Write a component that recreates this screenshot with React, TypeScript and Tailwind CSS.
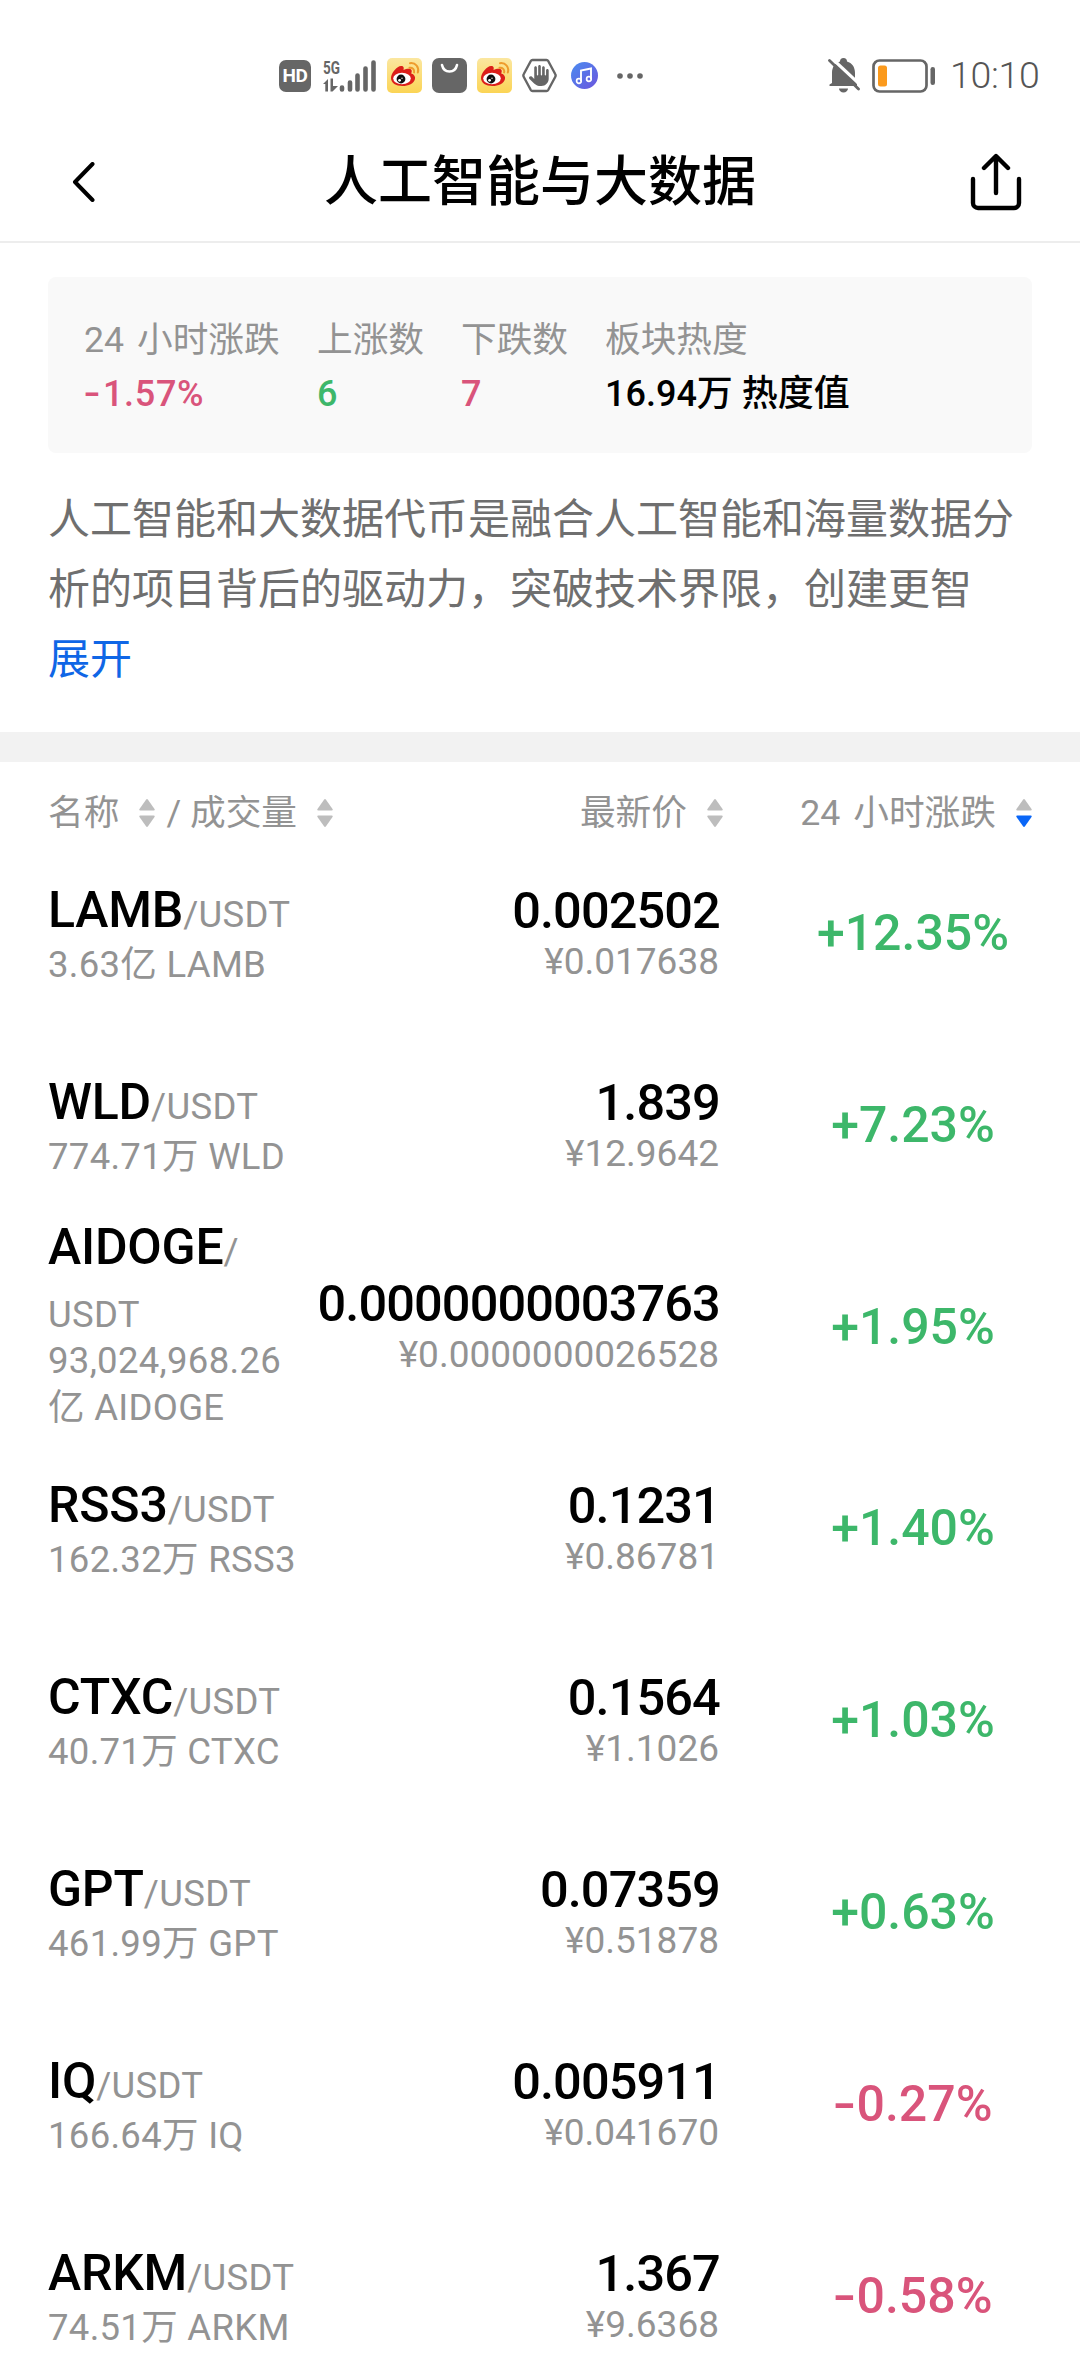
import { FaHand } from "react-icons/fa6";

const stats = [
  { label: "24 小时涨跌", value: "-1.57%", color: "text-[#d9547b]", width: "w-[233px]" },
  { label: "上涨数", value: "6", color: "text-[#3db76a]", width: "w-[144px]" },
  { label: "下跌数", value: "7", color: "text-[#d9547b]", width: "w-[144px]" },
  { label: "板块热度", value: "16.94万 热度值", color: "text-black", width: "w-[280px]" },
];

const coins = [
  { symbol: "LAMB", volume: ["3.63亿 LAMB"], price: "0.002502", cny: "¥0.017638", change: "+12.35%" },
  { symbol: "WLD", volume: ["774.71万 WLD"], price: "1.839", cny: "¥12.9642", change: "+7.23%" },
  {
    symbol: "AIDOGE",
    volume: ["93,024,968.26", "亿 AIDOGE"],
    price: "0.0000000003763",
    cny: "¥0.0000000026528",
    change: "+1.95%",
    tall: true,
  },
  { symbol: "RSS3", volume: ["162.32万 RSS3"], price: "0.1231", cny: "¥0.86781", change: "+1.40%" },
  { symbol: "CTXC", volume: ["40.71万 CTXC"], price: "0.1564", cny: "¥1.1026", change: "+1.03%" },
  { symbol: "GPT", volume: ["461.99万 GPT"], price: "0.07359", cny: "¥0.51878", change: "+0.63%" },
  { symbol: "IQ", volume: ["166.64万 IQ"], price: "0.005911", cny: "¥0.041670", change: "-0.27%" },
  { symbol: "ARKM", volume: ["74.51万 ARKM"], price: "1.367", cny: "¥9.6368", change: "-0.58%" },
];

const WeiboIcon = () => (
  <svg width="35" height="35" viewBox="0 0 35 35">
    <defs>
      <linearGradient id="weibo" x1="0" y1="0" x2="0" y2="1">
        <stop offset="0" stopColor="#fbe7a0" />
        <stop offset="1" stopColor="#fbd455" />
      </linearGradient>
    </defs>
    <rect width="35" height="35" rx="5" fill="url(#weibo)" />
    <path d="M4 20C4 15 10 8 14 8c3 0 3 2 2.500 4 3-1.500 7-2 8 0 .6 1.200 0 2.500-.3 3.400 3 .8 4.300 3 3.800 5.600-.9 4.500-6.500 7-12.500 7C9 28 4 25 4 20z" fill="#dc1f1a" />
    <ellipse cx="15" cy="20.500" rx="8.800" ry="5.700" fill="#fff" />
    <circle cx="14" cy="21" r="4.400" fill="#111" />
    <circle cx="12.600" cy="22.300" r="1.400" fill="#fff" />
    <circle cx="15" cy="20.300" r=".7" fill="#fff" />
    <path d="M22.500 9.800c3-.5 5.300 1.800 4.600 4.600M23 5.200c5.600-.7 9.500 4 7.800 9.300" fill="none" stroke="#ee9c2c" strokeWidth="2" strokeLinecap="round" />
  </svg>
);

const SignalIcon = () => (
  <svg className="overflow-visible" width="54" height="36" viewBox="0 0 54 36" fill="#666">
    <text x="0" y="16" fontSize="18" fontWeight="700" fontFamily="Roboto, sans-serif" textLength="17" lengthAdjust="spacingAndGlyphs">5G</text>
    <path d="M0 26l5-5V33.500H2.300V26zM7.500 20.500H10V28h5l-5.500 5.500h-2z" />
    <g stroke="#666" strokeWidth="4.600" strokeLinecap="round">
      <path d="M19 31.500v-2M27 31.500v-7M34.500 31.500v-14M42.500 31.500V10.500M50.500 31.500V4.500" />
    </g>
  </svg>
);

const StatusBar = () => (
  <div className="flex h-[122px] items-end pl-[279px]">
    <div className="flex h-[93px] w-full items-center">
      <div className="flex h-8 w-8 items-center justify-center rounded-[7px] bg-[#666]">
        <span className="text-[19px] leading-none font-bold tracking-[-0.5px] text-white">HD</span>
      </div>
      <div className="ml-3"><SignalIcon /></div>
      <div className="ml-2.5"><WeiboIcon /></div>
      <svg className="ml-2.5" width="35" height="35" viewBox="0 0 35 35">
        <rect width="35" height="35" rx="7" fill="#666" />
        <path d="M10 7c1 4.500 4 6.500 7.500 6.500S24 11.500 25 7" fill="none" stroke="#fff" strokeWidth="2.600" strokeLinecap="round" />
      </svg>
      <div className="ml-2.5"><WeiboIcon /></div>
      <div className="relative ml-2.5 flex h-[35px] w-[35px] items-center justify-center text-[#666]">
        <svg className="absolute inset-0" width="35" height="35" viewBox="0 0 35 35" fill="none">
          <path d="M10.500 2h14a2 2 0 0 1 1.700 1l7 13a3 3 0 0 1 0 3l-7 13a2 2 0 0 1-1.700 1h-14a2 2 0 0 1-1.700-1l-7-13a3 3 0 0 1 0-3l7-13a2 2 0 0 1 1.700-1z" stroke="#666" strokeWidth="2.400" />
        </svg>
        <FaHand size={21} />
      </div>
      <svg className="ml-3.5" width="27" height="27" viewBox="0 0 27 27">
        <defs>
          <linearGradient id="music" x1="0" y1="0" x2="1" y2="1">
            <stop offset="0" stopColor="#4a8cf0" />
            <stop offset="1" stopColor="#6c55dd" />
          </linearGradient>
        </defs>
        <circle cx="13.500" cy="13.500" r="13.500" fill="url(#music)" />
        <path d="M10 19V8.500L20 6.500V17" fill="none" stroke="#fff" strokeWidth="1.900" />
        <circle cx="7.900" cy="19" r="2.300" fill="none" stroke="#fff" strokeWidth="1.700" />
        <circle cx="17.900" cy="17" r="2.300" fill="none" stroke="#fff" strokeWidth="1.700" />
      </svg>
      <svg className="ml-[19px]" width="26" height="6" viewBox="0 0 26 6" fill="#666">
        <circle cx="3" cy="3" r="2.800" />
        <circle cx="13" cy="3" r="2.800" />
        <circle cx="23" cy="3" r="2.800" />
      </svg>
      <svg className="ml-[185px]" width="32" height="35" viewBox="0 0 32 35">
        <path d="M4 25V15C4 9 7 5 12 3.500a3.500 3.500 0 0 1 7 0C24 5 27 9 27 15v8l2 3v2H1.500v-1.500zM11 30.500h9a4.500 4 0 0 1-9 0z" fill="#666" />
        <path d="M3 -.5L33.500 28" stroke="#fff" strokeWidth="3.200" />
        <path d="M1.500 2.500L30.500 31" stroke="#666" strokeWidth="2.800" strokeLinecap="round" />
      </svg>
      <svg className="ml-3" width="64" height="34" viewBox="0 0 64 34">
        <rect x="1.500" y="1.500" width="53" height="31" rx="6" fill="none" stroke="#666" strokeWidth="2.700" />
        <rect x="6" y="6.500" width="9" height="21" rx="2.500" fill="#fb9a1d" />
        <rect x="58.500" y="8" width="4.500" height="18" rx="2.200" fill="#666" />
      </svg>
      <span className="ml-[14px] text-[37.500px] leading-none font-light tracking-[-0.3px] text-[#555]">10:10</span>
    </div>
  </div>
);

const SortIcon = ({ active = false }: { active?: boolean }) => (
  <svg width="16" height="28" viewBox="0 0 16 28">
    <path d="M7 .7a1.300 1.300 0 0 1 2 0l6.500 9.300c.5.800.2 1.500-.8 1.500H1.300c-1 0-1.300-.7-.8-1.500z" fill="#bdbdbd" />
    <path d="M7 27.300a1.300 1.300 0 0 0 2 0L15.500 18c.5-.8.2-1.500-.8-1.500H1.300c-1 0-1.300.7-.8 1.500z" fill={active ? "#0a66f7" : "#bdbdbd"} />
  </svg>
);

// Roboto's hyphen is short, so the minus sign gets stretched
const Percent = ({ value }: { value: string }) =>
  value.startsWith("-") ? (
    <>
      <span className="mr-[4px] ml-[2px] inline-block origin-center scale-x-[1.35]">-</span>
      {value.slice(1)}
    </>
  ) : (
    <>{value}</>
  );

const App = () => {
  return (
    <div className="h-[2376px] w-[1080px] overflow-hidden bg-white font-[Roboto,'Noto_Sans_CJK_SC',sans-serif] text-black">
      <StatusBar />

      {/* Title bar */}
      <header className="flex h-[121px] items-center justify-between border-b-2 border-[#ededed] pr-[58px] pl-[72px]">
        <svg width="24" height="40" viewBox="0 0 24 40" fill="none" stroke="#000" strokeWidth="4" strokeLinecap="round" strokeLinejoin="round">
          <path d="M20.500 2L3 20l17.500 18" />
        </svg>
        <h1 className="mr-[-14px] pt-[3px] text-[54px] leading-none font-medium">人工智能与大数据</h1>
        <svg width="52" height="58" viewBox="0 0 52 58" fill="none" stroke="#000" strokeWidth="4.400" strokeLinecap="round" strokeLinejoin="round">
          <path d="M3 26v24a5 5 0 0 0 5 5h36a5 5 0 0 0 5-5V26M26 40V4M14 15L26 3l12 12" />
        </svg>
      </header>

      {/* Sector summary */}
      <section className="mx-[48px] mt-[34px] flex h-[176px] rounded-lg bg-[#f9f9f9] pt-[39px] pl-[36px]">
        {stats.map((stat) => (
          <div key={stat.label} className={stat.width}>
            <div className="text-[35.700px] leading-[48px] [word-spacing:4px] whitespace-nowrap text-[#939393]">{stat.label}</div>
            <div className={`mt-[6px] text-[36px] leading-[48px] font-medium whitespace-nowrap ${stat.color}`}>
              {stat.value.startsWith("-") ? (
                <span className="tracking-[0.7px]"><Percent value={stat.value} /></span>
              ) : (
                stat.value
              )}
            </div>
          </div>
        ))}
      </section>

      {/* Description */}
      <section className="h-[279px] px-[48px] pt-[32px] text-[42px] leading-[70px] text-[#6f6f6f]">
        <p className="whitespace-nowrap">
          人工智能和大数据代币是融合人工智能和海量数据分
          <br />
          析的项目背后的驱动力，突破技术界限，创建更智
        </p>
        <button className="block text-[#0f66e6]">展开</button>
      </section>
      <div className="h-[30px] bg-[#f2f2f2]" />

      {/* Table header */}
      <div className="flex h-[75px] items-center px-[48px] pt-[27px] text-[35.700px] leading-[48px] whitespace-nowrap text-[#939393]">
        <div className="flex w-[400px] items-center">
          <span>名称</span>
          <span className="ml-5"><SortIcon /></span>
          <span className="ml-[11px]">/ 成交量</span>
          <span className="ml-5"><SortIcon /></span>
        </div>
        <div className="flex w-[275px] items-center justify-end gap-5">
          <span>最新价</span>
          <SortIcon />
        </div>
        <div className="flex flex-1 items-center justify-end gap-5">
          <span className="[word-spacing:4px]">24 小时涨跌</span>
          <SortIcon active />
        </div>
      </div>

      {/* Coin list */}
      {coins.map((coin) => (
        <div key={coin.symbol} className={`flex items-center px-[48px] whitespace-nowrap ${coin.tall ? "h-[211px]" : "h-[192px]"}`}>
          <div className={`w-[240px] text-[36.500px] leading-[47px] tracking-[0.3px] text-[#939393] ${coin.tall ? "pb-[7px]" : "pt-[6px]"}`}>
            <div className={coin.tall ? "-mb-[9px] leading-[63px]" : "leading-[52px]"}>
              <span className="text-[50px] font-medium tracking-[-0.2px] text-black">{coin.symbol}</span>/
              {coin.tall && <br />}
              USDT
            </div>
            {coin.volume.map((line) => (
              <div key={line}>{line}</div>
            ))}
          </div>
          <div className="w-[431px] text-right">
            <div className="mr-[-0.9px] text-[50.500px] leading-[56px] font-medium tracking-[-0.9px]">{coin.price}</div>
            <div className="text-[37px] leading-[45px] text-[#939393]">{coin.cny}</div>
          </div>
          <div className={`ml-[75px] w-[238px] text-center text-[50px] leading-none font-medium ${coin.change.startsWith("+") ? "text-[#3db76a]" : "text-[#d9547b]"}`}>
            <Percent value={coin.change} />
          </div>
        </div>
      ))}
    </div>
  );
};

export default App;
